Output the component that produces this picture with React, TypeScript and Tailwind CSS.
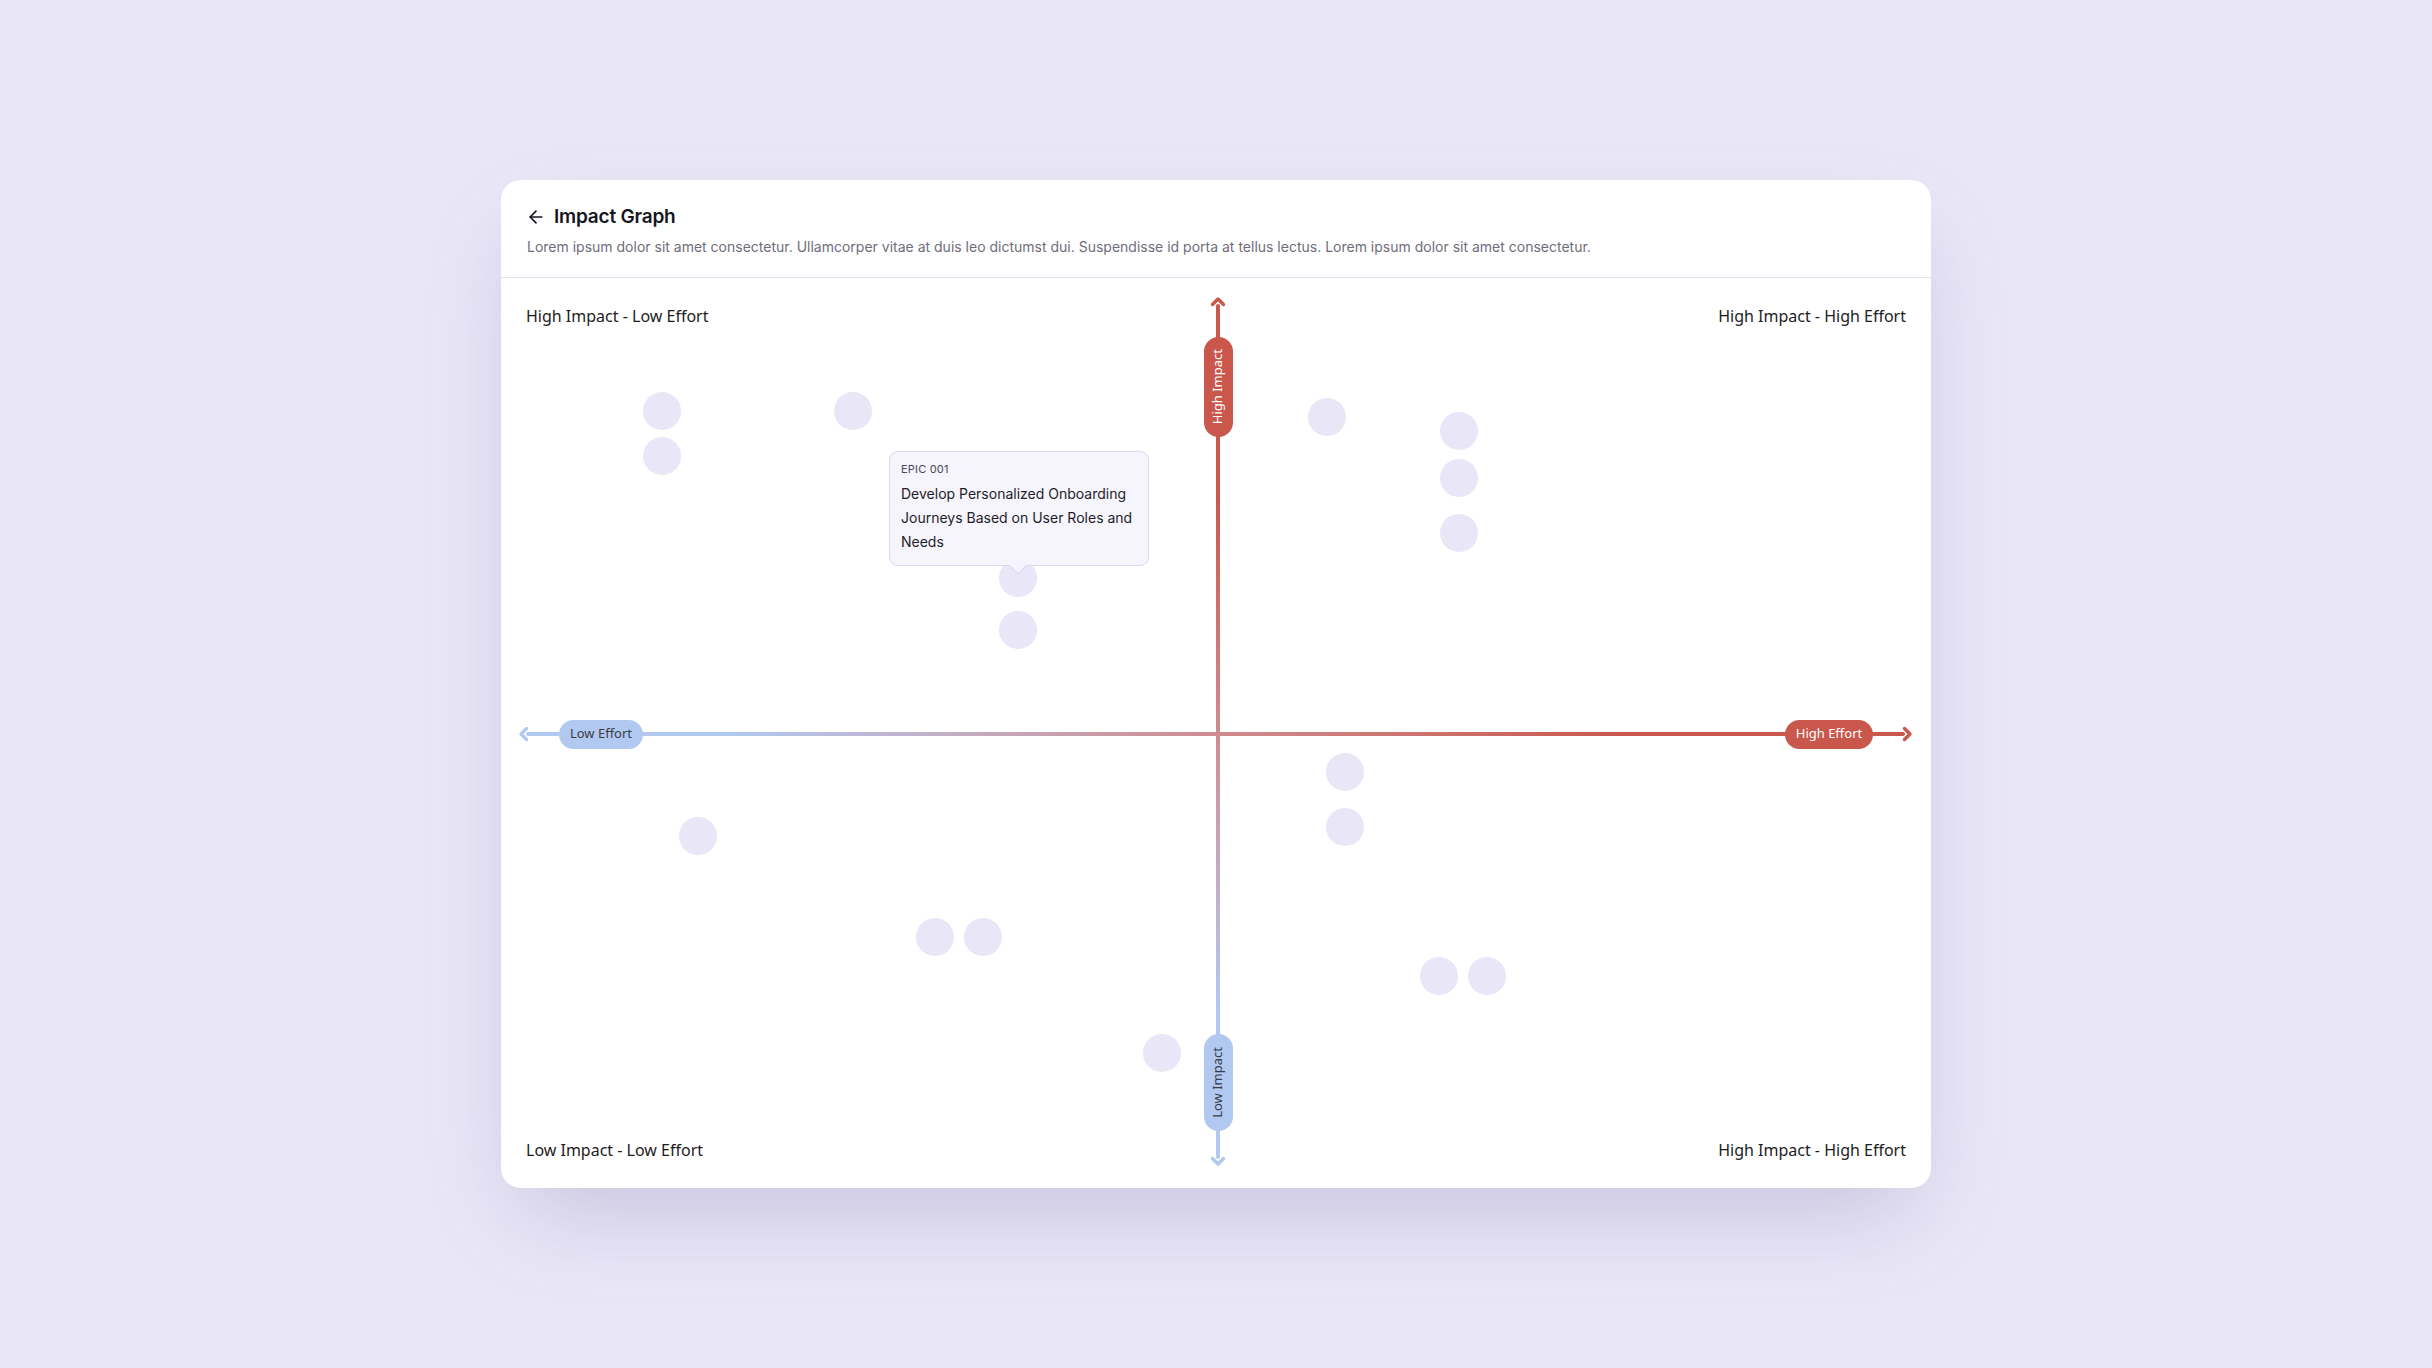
import React from "react";
import { ArrowLeft } from "lucide-react";

type Dot = { x: number; y: number };

// centres inside the graph area (px)
const dots: Dot[] = [
  { x: 161, y: 133 },
  { x: 161, y: 178 },
  { x: 352, y: 133 },
  { x: 517, y: 300 },
  { x: 517, y: 352 },
  { x: 826, y: 139 },
  { x: 958, y: 153 },
  { x: 958, y: 200 },
  { x: 958, y: 255 },
  { x: 844, y: 494 },
  { x: 844, y: 549 },
  { x: 197, y: 558 },
  { x: 434, y: 659 },
  { x: 482, y: 659 },
  { x: 938, y: 698 },
  { x: 986, y: 698 },
  { x: 661, y: 775 },
];

function Chevron({ dir, color }: { dir: "up" | "down" | "left" | "right"; color: string }) {
  const rot = { up: 0, right: 90, down: 180, left: 270 }[dir];
  return (
    <svg width="16" height="16" viewBox="0 0 16 16" className="shrink-0" style={{ transform: `rotate(${rot}deg)` }}>
      <path d="M2.5 9.5 L8 4 L13.5 9.5" fill="none" stroke={color} strokeWidth="3.4" strokeLinecap="round" strokeLinejoin="round" />
    </svg>
  );
}

export default function App() {
  return (
    <div className="min-h-screen w-full bg-[#e9e7f7] flex items-center justify-center font-['Inter',sans-serif]">
      <div className="w-[1430px] h-[1008px] bg-white rounded-[20px] shadow-[0_40px_90px_-20px_rgba(70,60,130,0.22)] flex flex-col overflow-hidden">
        <div className="h-[98px] border-b border-[#e4e2f1] px-[26px] pt-[24px] shrink-0">
          <div className="flex items-center gap-[8px] text-[#16151c]">
            <ArrowLeft size={20} strokeWidth={2} className="-ml-[1px]" />
            <span className="text-[19px] font-semibold tracking-[-0.2px] leading-[26px]">Impact Graph</span>
          </div>
          <p className="mt-[7px] text-[14px] leading-[20px] text-[#6f6d7b]">
            Lorem ipsum dolor sit amet consectetur. Ullamcorper vitae at duis leo dictumst dui. Suspendisse id porta at tellus lectus. Lorem ipsum dolor sit amet consectetur.
          </p>
        </div>

        <div className="relative flex-1 font-['Noto_Sans',sans-serif] text-[16px] text-[#1d1c22]">
          <div className="flex flex-col justify-between h-full px-[25px] pt-[26px] pb-[26px]">
            <div className="flex justify-between">
              <span>High Impact - Low Effort</span>
              <span>High Impact - High Effort</span>
            </div>
            <div className="flex justify-between">
              <span>Low Impact - Low Effort</span>
              <span>High Impact - High Effort</span>
            </div>
          </div>

          {/* horizontal axis */}
          <div className="absolute left-[16px] right-[17px] top-[440px] h-[32px] flex items-center">
            <Chevron dir="left" color="#b1c8f1" />
            <div className="relative flex-1 h-full flex items-center justify-between -mx-[7px] pl-[33px] pr-[32px]">
              <div className="absolute inset-x-0 top-[14px] h-[4px] rounded-full bg-linear-to-r from-[#b1c8f1] from-15% via-[#cf8b8f] to-[#c9574c] to-80%" />
              <div className="relative w-[84px] h-[29px] rounded-full bg-[#b1c8f1] text-[#3c3b44] text-[13px] flex items-center justify-center">
                Low Effort
              </div>
              <div className="relative w-[88px] h-[29px] rounded-full bg-[#c9574c] text-white text-[13px] flex items-center justify-center">
                High Effort
              </div>
            </div>
            <Chevron dir="right" color="#c9574c" />
          </div>

          {/* vertical axis */}
          <div className="absolute top-[17px] bottom-[20px] left-[701px] w-[32px] flex flex-col items-center">
            <Chevron dir="up" color="#c9574c" />
            <div className="relative flex-1 w-full flex flex-col items-center justify-between -my-[7px] pt-[33px] pb-[28px]">
              <div className="absolute inset-y-0 left-[14px] w-[4px] rounded-full bg-linear-to-b from-[#c9574c] from-22% via-[#cf8b8f] to-[#b1c8f1] to-82%" />
              <div className="relative w-[29px] h-[100px] rounded-full bg-[#c9574c] text-white text-[13px] flex items-center justify-center">
                <span className="[writing-mode:vertical-rl] rotate-180">High Impact</span>
              </div>
              <div className="relative w-[29px] h-[97px] rounded-full bg-[#b1c8f1] text-[#3c3b44] text-[13px] flex items-center justify-center">
                <span className="[writing-mode:vertical-rl] rotate-180">Low Impact</span>
              </div>
            </div>
            <Chevron dir="down" color="#b1c8f1" />
          </div>

          {/* dots */}
          {dots.map((d, i) => (
            <div
              key={i}
              className="absolute w-[38px] h-[38px] rounded-full bg-[#e8e6f7]"
              style={{ left: d.x - 19, top: d.y - 19 }}
            />
          ))}

          {/* tooltip */}
          <div className="absolute left-[388px] top-[173px] w-[260px] h-[115px] rounded-[9px] bg-[#f6f4fd] border border-[#dcd8ee] px-[11px] pt-[9px] font-['Inter',sans-serif]">
            <div className="text-[11px] leading-[16px] text-[#4a4955] tracking-[0.2px]">EPIC 001</div>
            <div className="mt-[5px] text-[14px] leading-[24px] text-[#1f1e26]">
              Develop Personalized Onboarding Journeys Based on User Roles and Needs
            </div>
            <div className="absolute left-[122px] -bottom-[7px] w-[12px] h-[12px] rotate-45 bg-[#f6f4fd] border-r border-b border-[#dcd8ee]" />
          </div>
        </div>
      </div>
    </div>
  );
}
